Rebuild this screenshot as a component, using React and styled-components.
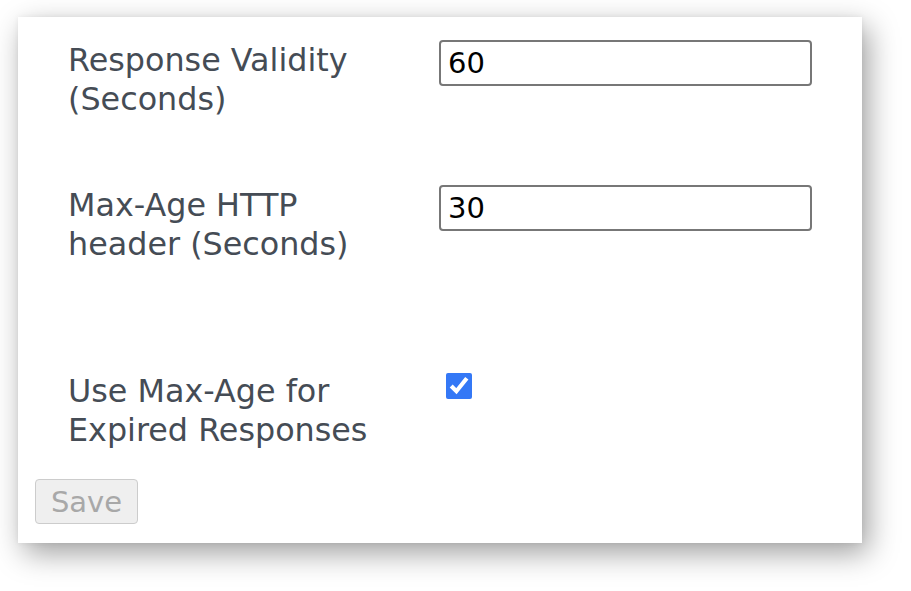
import React from "react";
import styled, { createGlobalStyle } from "styled-components";

const GlobalStyle = createGlobalStyle`
  html, body {
    margin: 0;
    padding: 0;
    background: #ffffff;
  }
  body {
    font-family: "DejaVu Sans", Verdana, sans-serif;
  }
`;

const Page = styled.div`
  width: 911px;
  height: 591px;
  padding: 17px 0 0 18px;
  box-sizing: border-box;
`;

const Card = styled.div`
  width: 844px;
  height: 526px;
  box-sizing: border-box;
  background: #ffffff;
  box-shadow: 6px 10px 28px rgba(0, 0, 0, 0.38), 0 0 6px rgba(0, 0, 0, 0.06);
  padding: 23px 0 0 17px;
  display: flex;
  flex-direction: column;
`;

const Form = styled.div`
  padding-left: 33px;
  display: flex;
  flex-direction: column;
`;

const Row = styled.div`
  display: grid;
  grid-template-columns: 371px 373px;
  align-items: start;
  margin-bottom: ${(props) => props.gap}px;
`;

const Label = styled.label`
  font-size: 31.8px;
  line-height: 39px;
  color: #454c55;
`;

const TextInput = styled.input`
  width: 373px;
  height: 46px;
  box-sizing: border-box;
  border: 2px solid #777777;
  border-radius: 4px;
  padding: 0 7px;
  font-family: "DejaVu Sans", Verdana, sans-serif;
  font-size: 29px;
  color: #000;
  outline: none;
`;

const Checkbox = styled.input`
  width: 26px;
  height: 26px;
  margin: 2px 0 0 7px;
  accent-color: #3478f6;
`;

const SaveButton = styled.button`
  align-self: flex-start;
  width: 103px;
  height: 45px;
  box-sizing: border-box;
  background: #efefef;
  border: 1.5px solid #cccccc;
  border-radius: 4px;
  color: #a8a8a8;
  font-family: "DejaVu Sans", Verdana, sans-serif;
  font-size: 29px;
  padding: 0;
`;

export default function App() {
  return (
    <Page>
      <GlobalStyle />
      <Card>
        <Form>
          <Row gap={67}>
            <Label>
              Response Validity
              <br />
              (Seconds)
            </Label>
            <TextInput type="text" defaultValue="60" />
          </Row>
          <Row gap={108}>
            <Label>
              Max-Age HTTP
              <br />
              header (Seconds)
            </Label>
            <TextInput type="text" defaultValue="30" />
          </Row>
          <Row gap={30}>
            <Label>
              Use Max-Age for
              <br />
              Expired Responses
            </Label>
            <div>
              <Checkbox type="checkbox" defaultChecked />
            </div>
          </Row>
        </Form>
        <SaveButton disabled>Save</SaveButton>
      </Card>
    </Page>
  );
}
